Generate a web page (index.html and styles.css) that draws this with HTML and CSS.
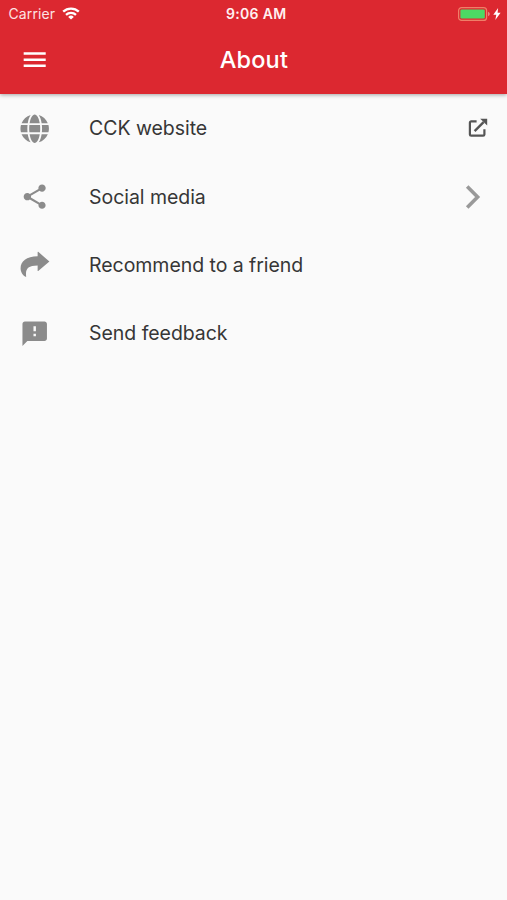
FILE: index.html
```html
<!DOCTYPE html>
<html lang="en">
<head>
<meta charset="utf-8">
<title>About</title>
<link rel="stylesheet" href="styles.css">
</head>
<body>
<header class="header">
  <div class="status">
    <div class="status-left">
      <span class="carrier">Carrier</span>
      <svg class="wifi" viewBox="0 0 18 13" fill="none" stroke="#fff" stroke-width="2.3"><path d="M1.2 4.7a11.3 11.3 0 0 1 15.6 0M4 7.9a7.3 7.3 0 0 1 10 0"/><path d="M9 12.6L6.2 9.9a4 4 0 0 1 5.6 0z" fill="#fff" stroke="none"/></svg>
    </div>
    <span class="time">9:06 AM</span>
    <div class="status-right">
      <svg class="battery" viewBox="0 0 32 14"><rect x=".6" y=".6" width="28" height="12.8" rx="3" fill="none" stroke="#ef7f68" stroke-width="1.2"/><rect x="2.4" y="2.4" width="24.4" height="9.2" rx="1.4" fill="#4cd964"/><path d="M30.2 4.8q1.5.7 1.5 2.2t-1.5 2.2z" fill="#ef9a9a"/></svg>
      <svg class="bolt" viewBox="0 0 8 12"><path d="M5.1 0L.3 6.800h3L2.300 12l5.300-7.300h-3z" fill="#fff"/></svg>
    </div>
  </div>
  <div class="appbar">
    <svg class="icon" viewBox="0 0 24 24"><path d="M3 18h18v-2H3v2zm0-5h18v-2H3v2zm0-7v2h18V6H3z"/></svg>
    <h1 class="title">About</h1>
    <span class="icon"></span>
  </div>
</header>
<main class="list">
  <div class="row">
    <svg class="icon" viewBox="-8 0 512 512"><path d="M336.500 160C322 70.700 287.800 8 248 8s-74 62.700-88.500 152h177zM152 256c0 22.200 1.200 43.500 3.300 64h185.300c2.100-20.500 3.300-41.800 3.300-64s-1.200-43.500-3.300-64H155.300c-2.100 20.500-3.300 41.800-3.300 64zm324.700-96c-28.600-67.900-86.500-120.400-158-141.600 24.400 33.800 41.200 84.700 50 141.600h108zM177.200 18.400C105.800 39.600 47.800 92.100 19.300 160h108c8.700-56.900 25.500-107.800 49.900-141.600zM487.400 192H372.700c2.100 21 3.300 42.500 3.300 64s-1.200 43-3.300 64h114.600c5.500-20.500 8.600-41.800 8.600-64s-3.100-43.500-8.500-64zM120 256c0-21.500 1.200-43 3.300-64H8.600C3.200 212.500 0 233.800 0 256s3.200 43.500 8.600 64h114.600c-2-21-3.200-42.500-3.200-64zm39.500 96c14.500 89.300 48.700 152 88.500 152s74-62.700 88.500-152h-177zm159.300 141.600c71.400-21.200 129.400-73.700 158-141.600h-108c-8.800 56.900-25.600 107.800-50 141.600zM19.300 352c28.600 67.900 86.500 120.400 158 141.600-24.400-33.800-41.200-84.700-50-141.600h-108z"/></svg>
    <span class="label">CCK website</span>
    <svg class="external" viewBox="0 0 20 20" fill="none" stroke="#555" stroke-width="2.2"><path d="M8.600 3.400H3.200a1.300 1.300 0 0 0-1.300 1.300v11.700a1.300 1.300 0 0 0 1.300 1.300h11.900a1.300 1.300 0 0 0 1.300-1.300v-5.200"/><path d="M6.600 13.200L15.600 4.200" stroke-width="2.400"/><path d="M12.200.8h7v6.700z" fill="#555" stroke="none"/></svg>
  </div>
  <div class="row">
    <svg class="icon" viewBox="0 0 24 24"><path d="M18 16.080c-.76 0-1.440.3-1.960.77L8.910 12.700c.05-.23.09-.46.09-.7s-.04-.47-.09-.7l7.050-4.110c.54.5 1.250.81 2.040.81 1.660 0 3-1.340 3-3s-1.340-3-3-3-3 1.340-3 3c0 .24.04.47.09.7L8.040 9.810C7.500 9.310 6.790 9 6 9c-1.660 0-3 1.340-3 3s1.340 3 3 3c.79 0 1.500-.31 2.040-.81l7.120 4.160c-.05.21-.08.43-.08.65 0 1.610 1.310 2.920 2.920 2.920s2.920-1.310 2.920-2.920-1.310-2.920-2.920-2.920z"/></svg>
    <span class="label">Social media</span>
    <svg class="chevron" viewBox="0 0 16 24" fill="none" stroke="#999" stroke-width="3.600"><path d="M2.200 1.600L12.600 12 2.200 22.400"/></svg>
  </div>
  <div class="row">
    <svg class="icon" viewBox="0 0 30 30"><path d="M30 11.700L18.600 1.900q-.6-.4-.6.3v4.200C6.500 6.700.6 11.400.6 18.700c0 4 2.200 7.300 5.200 8.700q.6.200.5-.4C5.400 19.600 7.800 15.900 18 15.900v5.200q0 .7.600.3z"/></svg>
    <span class="label">Recommend to a friend</span>
  </div>
  <div class="row">
    <svg class="icon" viewBox="0 0 24 24"><path d="M20 2H4c-1.100 0-1.990.9-1.990 2L2 22l4-4h14c1.100 0 2-.9 2-2V4c0-1.100-.9-2-2-2zm-7 12h-2v-2h2v2zm0-4h-2V6h2v4z"/></svg>
    <span class="label">Send feedback</span>
  </div>
</main>
</body>
</html>
```
FILE: styles.css
```css
* { box-sizing: border-box; }
body {
  margin: 0;
  min-height: 900px;
  background: #fafafa;
  color: #363636;
  font-family: Inter, "Liberation Sans", sans-serif;
}
svg { display: block; flex: none; }
.header {
  height: 93.5px;
  background: #dc2830;
  color: #fff;
  box-shadow: 0 1px 4px rgba(0, 0, 0, .35);
}
.status {
  display: grid;
  grid-template-columns: 1fr auto 1fr;
  align-items: center;
  height: 26px;
  padding: 1px 6px 0 8.5px;
  line-height: 16px;
}
.status-left, .status-right { display: flex; align-items: center; }
.status-left { gap: 7px; }
.status-right { justify-content: flex-end; gap: 3px; }
.carrier { font-size: 14px; letter-spacing: .1px; color: #fde3e3; }
.time { font-size: 14px; font-weight: 600; letter-spacing: .35px; margin-left: 3px; color: #fff0f0; }
.wifi { width: 18px; height: 13px; }
.battery { width: 32px; height: 14px; }
.bolt { width: 8px; height: 12px; }
.appbar {
  display: flex;
  align-items: center;
  justify-content: space-between;
  height: 68px;
  padding: 0 19.5px 0 20.3px;
}
.title {
  margin: 0;
  font-size: 23.5px;
  line-height: 30px;
  font-weight: 500;
  letter-spacing: .2px;
}
.icon { width: 29.4px; height: 29.4px; fill: #8b8b8b; }
.appbar .icon { fill: #fff; }
.list { padding-top: .6px; }
.row {
  display: flex;
  align-items: center;
  height: 68.4px;
  padding: 0 18.7px 0 20.4px;
}
.label {
  flex: 1;
  margin-left: 39.3px;
  font-size: 19.5px;
  line-height: 26px;
  letter-spacing: -.05px;
}
.external { width: 20px; height: 20px; }
.chevron { width: 16px; height: 24px; margin-right: 7.4px; }
```
